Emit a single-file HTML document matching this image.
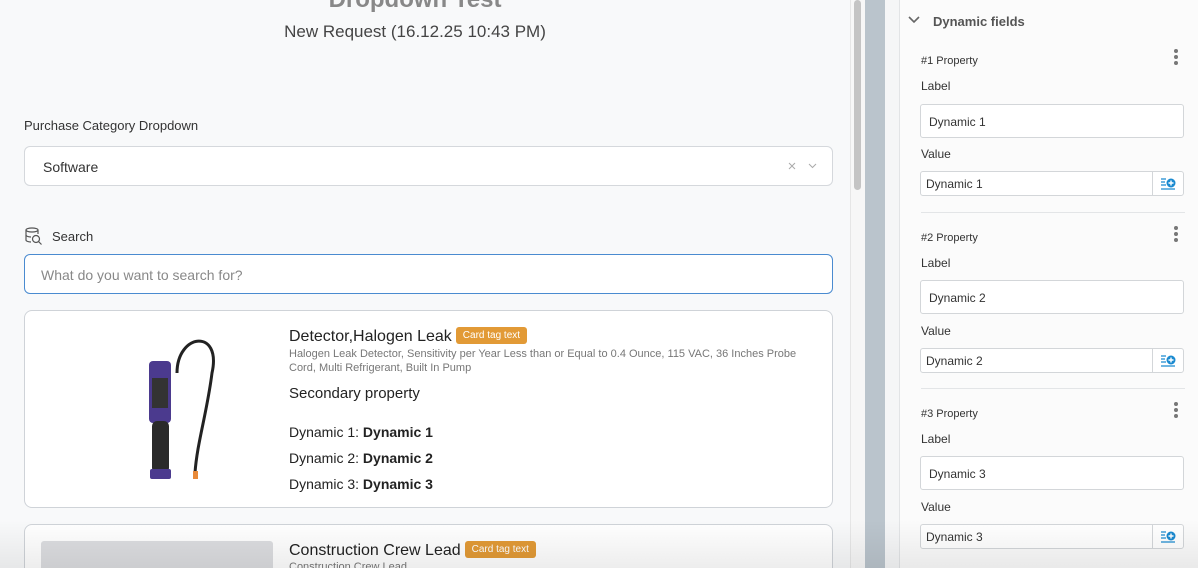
<!DOCTYPE html>
<html><head><style>
*{box-sizing:border-box;margin:0;padding:0}
html{width:1198px;height:568px;overflow:hidden}
body{width:1198px;height:568px;overflow:hidden;background:#f8f9fa;font-family:"Liberation Sans",sans-serif;position:relative;color:#333}
.left{position:absolute;left:0;top:0;width:850px;height:568px;background:#f8f9fa;overflow:hidden}
.title{position:absolute;left:0;width:830px;top:-14px;text-align:center;font-size:24px;font-weight:bold;color:#888}
.sub{position:absolute;left:0;width:830px;top:22px;text-align:center;font-size:17px;color:#444}
.lbl{position:absolute;font-size:13px;color:#333}
.box{position:absolute;left:24px;width:809px;background:#fff;border:1px solid #d5d8dc;border-radius:6px}
.card{position:absolute;left:24px;width:809px;background:#fff;border:1px solid #cfd3d8;border-radius:8px}
.tag{display:inline-block;background:#e29a36;color:#fff;font-size:10px;padding:3px 7px;border-radius:3px;vertical-align:3px;margin-left:4px}
.rp{position:absolute;left:899px;top:0;width:299px;height:568px;background:#fbfbfb;border-left:1px solid #e2e4e6}
.r{position:absolute;left:21px;font-size:12px;color:#333}
.inp{position:absolute;left:20px;width:264px;height:34px;background:#fff;border:1px solid #d3d6d9;border-radius:3px;font-size:12px;padding:10px 8px}
.vin{position:absolute;left:20px;width:264px;height:25px;background:#fff;border:1px solid #d3d6d9;border-radius:3px;font-size:12px;padding:5px 5px}
.vin b{position:absolute;right:0;top:0;width:31px;height:23px;border-left:1px solid #d3d6d9;font-weight:normal}
.dots{position:absolute;left:274px;width:4px}
.dots i{display:block;width:4px;height:4px;border-radius:2px;background:#777;margin-bottom:2px}
.hr{position:absolute;left:21px;width:264px;border-top:1px solid #e3e5e7}
</style></head><body>
<div class="left">
<div class="title">Dropdown Test</div>
<div class="sub">New Request (16.12.25 10:43 PM)</div>
<div class="lbl" style="left:24px;top:118px">Purchase Category Dropdown</div>
<div class="box" style="top:146px;height:40px;padding:12px 18px;font-size:14px">Software
<svg style="position:absolute;right:36px;top:15px" width="8" height="8"><path d="M1 1l6 6M7 1l-6 6" stroke="#aaa" stroke-width="1"/></svg>
<svg style="position:absolute;right:15px;top:16px" width="9" height="6"><path d="M1 1l3.5 3.5L8 1" stroke="#aaa" stroke-width="1" fill="none"/></svg></div>
<svg style="position:absolute;left:24px;top:226px" width="20" height="20" viewBox="0 0 20 20" fill="none" stroke="#555" stroke-width="1.2"><ellipse cx="8" cy="4" rx="6" ry="2"/><path d="M2 4v10c0 1 2 2 5 2M14 4v4"/><path d="M2 9c0 1 2 2 5 2"/><circle cx="12" cy="13" r="3.5"/><path d="M14.5 15.5l3 3"/></svg>
<div class="lbl" style="left:52px;top:229px">Search</div>
<div class="box" style="top:254px;height:40px;border-color:#4a8bd0;padding:12px 16px;font-size:14px;color:#888">What do you want to search for?</div>
<div class="card" style="top:310px;height:198px">
<svg style="position:absolute;left:112px;top:22px" width="80" height="150" viewBox="0 0 80 150"><path d="M40 40 C40 0 85 -5 75 40 C70 80 60 110 58 140" stroke="#222" stroke-width="3" fill="none"/><rect x="56" y="138" width="5" height="8" fill="#e88a3a"/><rect x="12" y="28" width="22" height="62" rx="4" fill="#4b3a8e"/><rect x="15" y="45" width="16" height="30" fill="#333"/><rect x="15" y="88" width="17" height="52" rx="5" fill="#2a2a2a"/><rect x="13" y="136" width="21" height="10" rx="2" fill="#4b3a8e"/></svg>
<div style="position:absolute;left:264px;top:16px;font-size:16px;color:#222">Detector,Halogen Leak<span class="tag">Card tag text</span></div>
<div style="position:absolute;left:264px;top:36px;width:520px;font-size:11px;color:#777;line-height:14px">Halogen Leak Detector, Sensitivity per Year Less than or Equal to 0.4 Ounce, 115 VAC, 36 Inches Probe Cord, Multi Refrigerant, Built In Pump</div>
<div style="position:absolute;left:264px;top:74px;font-size:15px;color:#222">Secondary property</div>
<div style="position:absolute;left:264px;top:108px;font-size:14px;color:#222;line-height:26px">Dynamic 1: <b>Dynamic 1</b><br>Dynamic 2: <b>Dynamic 2</b><br>Dynamic 3: <b>Dynamic 3</b></div>
</div>
<div class="card" style="top:524px;height:60px">
<div style="position:absolute;left:16px;top:16px;width:232px;height:40px;background:#dcdde0;border-radius:3px"></div>
<div style="position:absolute;left:264px;top:16px;font-size:16px;color:#222">Construction Crew Lead<span class="tag">Card tag text</span></div>
<div style="position:absolute;left:264px;top:36px;font-size:11px;color:#777">Construction Crew Lead</div>
</div>
</div>
<div style="position:absolute;left:850px;top:0;width:15px;height:568px;background:#f7f7f7;border-left:1px solid #e6e6e6"></div>
<div style="position:absolute;left:854px;top:0;width:7px;height:190px;background:#c4c4c4;border-radius:4px"></div>
<div style="position:absolute;left:865px;top:0;width:20px;height:568px;background:#bac4cc"></div>
<div style="position:absolute;left:885px;top:0;width:14px;height:568px;background:#f5f6f7"></div>
<div class="rp">
<svg style="position:absolute;left:8px;top:16px" width="12" height="8"><path d="M1 1l5 5 5-5" stroke="#666" stroke-width="1.6" fill="none"/></svg>
<div style="position:absolute;left:33px;top:14px;font-size:13px;font-weight:bold;color:#555">Dynamic fields</div>

<div class="r" style="top:55px;font-size:11px">#1 Property</div><div class="dots" style="top:49px"><i></i><i></i><i></i></div>
<div class="r" style="top:79px">Label</div>
<div class="inp" style="top:104px">Dynamic 1</div>
<div class="r" style="top:147px">Value</div>
<div class="vin" style="top:171px">Dynamic 1<b><svg width="31" height="23" viewBox="0 0 31 23"><path d="M8 7h5M8 10h4M8 13h5M8 17h14" stroke="#1a8ad0" stroke-width="1.2"/><circle cx="18" cy="11" r="4.5" fill="#1a8ad0"/><path d="M18 8.5v5M15.5 11h5" stroke="#fff" stroke-width="1.4"/></svg></b></div>
<div class="hr" style="top:212px"></div>

<div class="r" style="top:232px;font-size:11px">#2 Property</div><div class="dots" style="top:226px"><i></i><i></i><i></i></div>
<div class="r" style="top:256px">Label</div>
<div class="inp" style="top:280px">Dynamic 2</div>
<div class="r" style="top:324px">Value</div>
<div class="vin" style="top:348px">Dynamic 2<b><svg width="31" height="23" viewBox="0 0 31 23"><path d="M8 7h5M8 10h4M8 13h5M8 17h14" stroke="#1a8ad0" stroke-width="1.2"/><circle cx="18" cy="11" r="4.5" fill="#1a8ad0"/><path d="M18 8.5v5M15.5 11h5" stroke="#fff" stroke-width="1.4"/></svg></b></div>
<div class="hr" style="top:388px"></div>

<div class="r" style="top:408px;font-size:11px">#3 Property</div><div class="dots" style="top:402px"><i></i><i></i><i></i></div>
<div class="r" style="top:432px">Label</div>
<div class="inp" style="top:456px">Dynamic 3</div>
<div class="r" style="top:500px">Value</div>
<div class="vin" style="top:524px">Dynamic 3<b><svg width="31" height="23" viewBox="0 0 31 23"><path d="M8 7h5M8 10h4M8 13h5M8 17h14" stroke="#1a8ad0" stroke-width="1.2"/><circle cx="18" cy="11" r="4.5" fill="#1a8ad0"/><path d="M18 8.5v5M15.5 11h5" stroke="#fff" stroke-width="1.4"/></svg></b></div>
</div>
<div style="position:absolute;left:0;top:520px;width:1198px;height:48px;background:linear-gradient(rgba(0,0,0,0),rgba(0,0,0,0.07))"></div>
</body></html>
